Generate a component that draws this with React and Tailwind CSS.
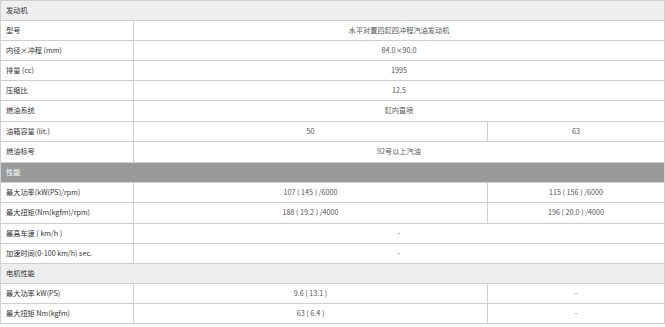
import React from 'react';

const rows = [
  { type: 'section', label: '发动机', tone: 'light' },
  { label: '型号', values: ['水平对置四缸四冲程汽油发动机'] },
  { label: '内径×冲程 (mm)', values: ['84.0×90.0'] },
  { label: '排量 (cc)', values: ['1995'] },
  { label: '压缩比', values: ['12.5'] },
  { label: '燃油系统', values: ['缸内直喷'], tall: true },
  { label: '油箱容量 (lit.)', values: ['50', '63'] },
  { label: '燃油标号', values: ['92号以上汽油'], tall: true },
  { type: 'section', label: '性能', tone: 'dark' },
  { label: '最大功率(kW(PS)/rpm)', values: ['107 ( 145 ) /6000', '115 ( 156 ) /6000'] },
  { label: '最大扭矩(Nm(kgfm)/rpm)', values: ['188 ( 19.2 ) /4000', '196 ( 20.0 ) /4000'], tall: true },
  { label: '最高车速 ( km/h )', values: ['-'] },
  { label: '加速时间(0-100 km/h) sec.', values: ['-'] },
  { type: 'section', label: '电机性能', tone: 'light' },
  { label: '最大功率 kW(PS)', values: ['9.6 ( 13.1 )', '-'] },
  { label: '最大扭矩 Nm(kgfm)', values: ['63 ( 6.4 )', '-'] },
];

const cell = 'border border-[#cfcfcf] p-0 align-middle';

export default function App() {
  return (
    <div
      className="w-[665px] h-[327px] bg-white overflow-hidden text-[7.2px] leading-none text-[#444]"
      style={{ fontFamily: '"Noto Sans CJK SC", "Noto Sans", sans-serif' }}
    >
      <table className="w-[664px] border-collapse table-fixed">
        <colgroup>
          <col className="w-[133px]" />
          <col className="w-[354px]" />
          <col className="w-[177px]" />
        </colgroup>
        <tbody>
          {rows.map((row, i) => {
            const h = row.tall ? 'h-[21px]' : 'h-[20px]';
            if (row.type === 'section') {
              return (
                <tr key={i} className={h}>
                  <td
                    colSpan={3}
                    className={`${cell} pl-[5px] ${
                      row.tone === 'dark' ? 'bg-[#9a9a9a] text-white' : 'bg-[#eeeeee] text-[#333]'
                    }`}
                  >
                    {row.label}
                  </td>
                </tr>
              );
            }
            return (
              <tr key={i} className={h}>
                <td className={`${cell} pl-[5px] text-[#333]`}>{row.label}</td>
                {row.values.length === 1 ? (
                  <td colSpan={2} className={`${cell} text-center text-[#555]`}>
                    {row.values[0]}
                  </td>
                ) : (
                  row.values.map((v, j) => (
                    <td key={j} className={`${cell} text-center text-[#555]`}>
                      {v}
                    </td>
                  ))
                )}
              </tr>
            );
          })}
        </tbody>
      </table>
    </div>
  );
}
